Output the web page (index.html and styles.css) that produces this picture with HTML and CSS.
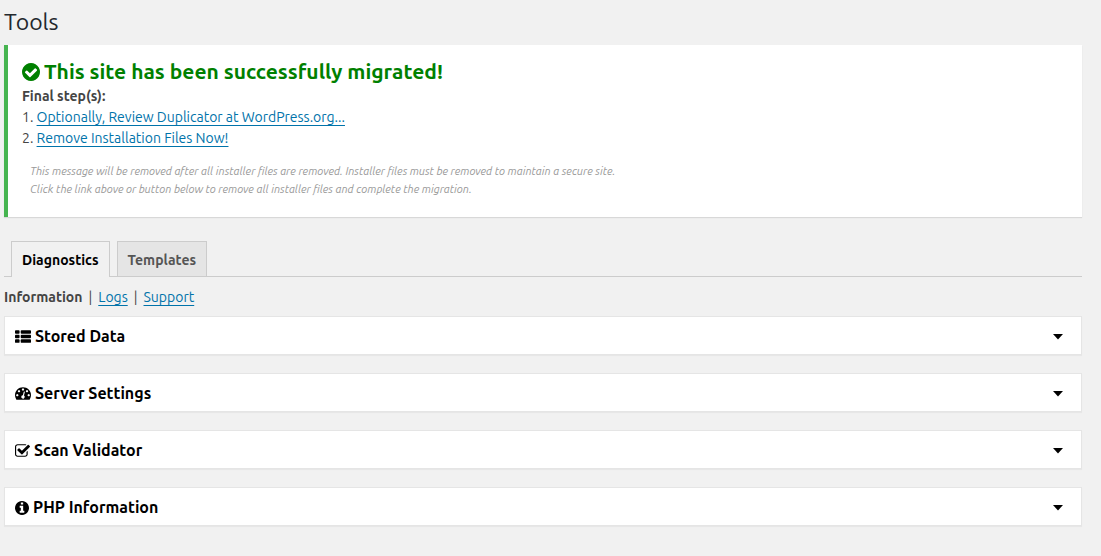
FILE: index.html
```html
<!DOCTYPE html>
<html lang="en">
<head>
    <meta charset="UTF-8">
    <meta name="viewport" content="width=device-width, initial-scale=1.0">
    <title>Tools</title>
    <link rel="stylesheet" href="styles.css">
</head>
<body>
    <main class="wrap">
        <h1 class="page-title">Tools</h1>

        <section class="notice">
            <h2 class="notice-title">
                <svg class="notice-icon" viewBox="0 0 1536 1536" aria-hidden="true"><path d="M1284 606q0-28-18-46l-91-90q-19-19-45-19t-45 19l-408 407-226-226q-19-19-45-19t-45 19l-91 90q-18 18-18 46 0 27 18 45l362 362q19 19 45 19 27 0 46-19l543-543q18-18 18-45zm252 162q0 209-103 385.500t-279.500 279.500-385.500 103-385.500-103-279.500-279.500-103-385.500 103-385.500 279.500-279.500 385.500-103 385.500 103 279.500 279.500 103 385.500z"/></svg>
                <span>This site has been successfully migrated!</span>
            </h2>
            <p class="steps-label">Final step(s):</p>
            <ol class="steps">
                <li><a href="#">Optionally, Review Duplicator at WordPress.org...</a></li>
                <li><a href="#">Remove Installation Files Now!</a></li>
            </ol>
            <p class="notice-hint">
                This message will be removed after all installer files are removed. Installer files must be removed to maintain a secure site.<br>
                Click the link above or button below to remove all installer files and complete the migration.
            </p>
        </section>

        <nav class="tabs">
            <a href="#" class="tab tab-active">Diagnostics</a>
            <a href="#" class="tab">Templates</a>
        </nav>

        <nav class="sub-nav">
            <b>Information</b>
            <span>|</span>
            <a href="#">Logs</a>
            <span>|</span>
            <a href="#">Support</a>
        </nav>

        <div class="panels">
            <button type="button" class="panel">
                <svg class="icon icon-wide" viewBox="0 0 1792 1408" aria-hidden="true"><rect width="512" height="384" rx="96"/><rect x="640" width="1152" height="384" rx="96"/><rect y="512" width="512" height="384" rx="96"/><rect x="640" y="512" width="1152" height="384" rx="96"/><rect y="1024" width="512" height="384" rx="96"/><rect x="640" y="1024" width="1152" height="384" rx="96"/></svg>
                <span class="panel-title">Stored Data</span>
                <svg class="caret" viewBox="0 0 10 6" aria-hidden="true"><path d="M0 0h10L5 5.500z"/></svg>
            </button>
            <button type="button" class="panel">
                <svg class="icon icon-wide" viewBox="0 256 1792 1408" aria-hidden="true"><path d="M384 1152q0-53-37.500-90.500t-90.500-37.500-90.500 37.500-37.500 90.500 37.500 90.500 90.500 37.500 90.500-37.500 37.500-90.500zm192-448q0-53-37.500-90.500t-90.500-37.500-90.500 37.500-37.500 90.500 37.500 90.500 90.500 37.500 90.500-37.500 37.500-90.500zm428 481l101-382q6-26-7.500-48.500t-38.500-29.500-48 6.500-30 39.500l-101 382q-60 5-107 43.500t-63 98.500q-20 77 20 146t117 89 146-20 89-117q16-60-6-117t-72-91zm660-33q0-53-37.500-90.500t-90.500-37.500-90.500 37.500-37.500 90.500 37.500 90.500 90.500 37.500 90.500-37.500 37.500-90.500zm-640-640q0-53-37.500-90.500t-90.500-37.500-90.500 37.500-37.500 90.500 37.500 90.500 90.500 37.500 90.500-37.500 37.500-90.500zm448 192q0-53-37.500-90.500t-90.500-37.500-90.500 37.500-37.500 90.500 37.500 90.500 90.500 37.500 90.500-37.500 37.500-90.500zm320 448q0 261-141 483-19 29-54 29h-1402q-35 0-54-29-141-221-141-483 0-182 71-348t191-286 286-191 348-71 348 71 286 191 191 286 71 348z"/></svg>
                <span class="panel-title">Server Settings</span>
                <svg class="caret" viewBox="0 0 10 6" aria-hidden="true"><path d="M0 0h10L5 5.500z"/></svg>
            </button>
            <button type="button" class="panel">
                <svg class="icon icon-check" viewBox="0 0 1664 1408" aria-hidden="true"><path d="M1408 802v318q0 119-84.500 203.500t-203.500 84.500h-832q-119 0-203.500-84.500t-84.500-203.500v-832q0-119 84.500-203.500t203.500-84.500h832q63 0 117 25 15 7 18 23 3 17-9 29l-49 49q-10 10-23 10-3 0-9-2-23-6-45-6h-832q-66 0-113 47t-47 113v832q0 66 47 113t113 47h832q66 0 113-47t47-113v-254q0-13 9-22l64-64q10-10 23-10 6 0 12 3 20 8 20 29zm231-489l-814 814q-24 24-57 24t-57-24l-430-430q-24-24-24-57t24-57l110-110q24-24 57-24t57 24l263 263 647-647q24-24 57-24t57 24l110 110q24 24 24 57t-24 57z"/></svg>
                <span class="panel-title">Scan Validator</span>
                <svg class="caret" viewBox="0 0 10 6" aria-hidden="true"><path d="M0 0h10L5 5.500z"/></svg>
            </button>
            <button type="button" class="panel">
                <svg class="icon" viewBox="0 0 1536 1536" aria-hidden="true"><path d="M1024 1248v-160q0-14-9-23t-23-9h-96v-512q0-14-9-23t-23-9h-320q-14 0-23 9t-9 23v160q0 14 9 23t23 9h96v320h-96q-14 0-23 9t-9 23v160q0 14 9 23t23 9h448q14 0 23-9t9-23zm-128-896v-160q0-14-9-23t-23-9h-192q-14 0-23 9t-9 23v160q0 14 9 23t23 9h192q14 0 23-9t9-23zm640 416q0 209-103 385.500t-279.500 279.500-385.500 103-385.500-103-279.500-279.500-103-385.500 103-385.500 279.500-279.500 385.500-103 385.500 103 279.500 279.500 103 385.500z"/></svg>
                <span class="panel-title">PHP Information</span>
                <svg class="caret" viewBox="0 0 10 6" aria-hidden="true"><path d="M0 0h10L5 5.500z"/></svg>
            </button>
        </div>
    </main>
</body>
</html>
```

FILE: styles.css
```css
body {
    margin: 0;
    background-color: #f1f1f1;
    color: #444;
    font-family: Ubuntu, "Noto Sans", sans-serif;
    font-size: 14px;
    line-height: 21px;
}
a {
    color: #0073aa;
    text-underline-offset: 3px;
}
.wrap {
    padding: 8px 19px 20px 4px;
}
.page-title {
    margin: 0;
    padding-bottom: 10px;
    color: #23282d;
    font-size: 23px;
    font-weight: 400;
    line-height: 27px;
}

/* migration notice */
.notice {
    padding: 12px 14px 19px;
    border-left: 4px solid #46b450;
    background-color: #fff;
    box-shadow: 0 1px 1px rgba(0, 0, 0, 0.1);
}
.notice-title {
    display: flex;
    align-items: center;
    gap: 4px;
    margin: 0;
    color: green;
    font-size: 21px;
    font-weight: 600;
    line-height: 29px;
}
.notice-icon {
    width: 18px;
    height: 18px;
    fill: currentColor;
}
.steps-label {
    margin: 0;
    font-weight: 600;
}
.steps {
    margin: 0;
    padding: 0;
    list-style: none;
    counter-reset: step;
}
.steps li::before {
    counter-increment: step;
    content: counter(step) ". ";
}
.notice-hint {
    margin: 13px 0 0;
    padding-left: 8px;
    color: #999;
    font-size: 11px;
    font-style: italic;
    line-height: 18px;
}

/* tabs */
.tabs {
    display: flex;
    gap: 7px;
    margin-top: 24px;
    padding-left: 7px;
    border-bottom: 1px solid #ccc;
}
.tab {
    padding: 8px 10px 5px;
    border: 1px solid #ccc;
    border-bottom: 0;
    background-color: #e5e5e5;
    color: #555;
    font-weight: 600;
    text-decoration: none;
}
.tab-active {
    margin-bottom: -1px;
    padding-bottom: 6px;
    background-color: #f1f1f1;
    color: #000;
}
.sub-nav {
    display: flex;
    gap: 6px;
    padding: 10px 0 8px;
}
.sub-nav b {
    font-weight: 600;
}

/* collapsible panels */
.panels {
    display: grid;
    gap: 18px;
}
.panel {
    display: flex;
    align-items: center;
    gap: 4px;
    width: 100%;
    padding: 9px 18px 7px 10px;
    border: 1px solid #e5e5e5;
    background-color: #fff;
    box-shadow: 0 1px 1px rgba(0, 0, 0, 0.04);
    color: #000;
    font: inherit;
    font-size: 16px;
    font-weight: 600;
    text-align: left;
    cursor: pointer;
}
.panel-title {
    flex: 1;
}
.icon {
    width: 14px;
    height: 14px;
}
.icon-wide {
    width: 16px;
    height: 13px;
}
.icon-check {
    width: 15px;
    height: 13px;
}
.caret {
    width: 10px;
    height: 6px;
}
```
